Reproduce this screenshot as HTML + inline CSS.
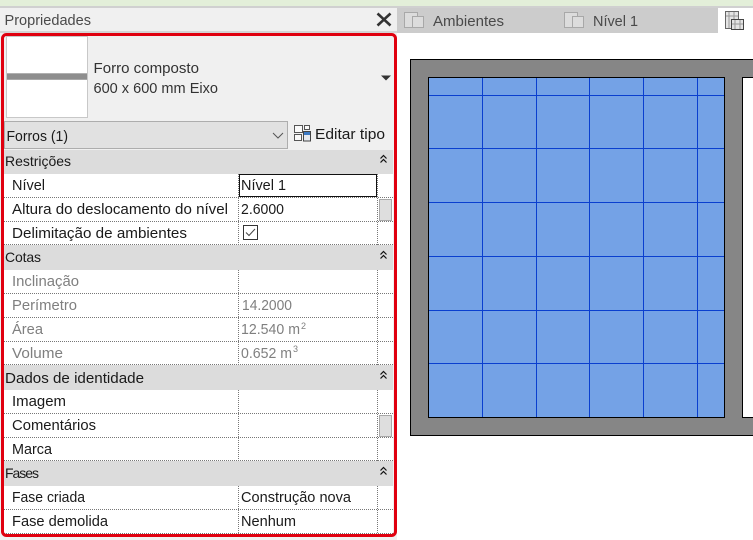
<!DOCTYPE html>
<html><head><meta charset="utf-8"><style>
html,body{margin:0;padding:0;background:#fff;width:753px;height:540px;overflow:hidden}
svg{display:block}
text{font-family:"Liberation Sans",sans-serif;font-size:14.5px;fill:#1a1a1a}
.h{font-size:14px}
.d{stroke:#777;stroke-width:1;stroke-dasharray:1 1;fill:none}
.c{shape-rendering:crispEdges}
</style></head><body>
<svg width="753" height="540" viewBox="0 0 753 540" xmlns="http://www.w3.org/2000/svg">
<rect class="c" width="753" height="540" fill="#fff"/>
<rect class="c" width="753" height="6" fill="#e3efd9"/>
<rect class="c" y="6" width="753" height="2" fill="#d0d0d0"/>
<rect class="c" y="8" width="397" height="532" fill="#f0f0f0"/>
<rect class="c" x="397" y="8" width="321" height="25" fill="#cccccc"/>
<text x="4.5" y="25" textLength="86.5" lengthAdjust="spacingAndGlyphs" style="fill:#4a4a4a">Propriedades</text>
<path d="M377.5 13.5L390.5 25.5M390.5 13.5L377.5 25.5" stroke="#333" stroke-width="2.6" fill="none"/>
<rect class="c" x="0" y="31" width="397" height="2" fill="#d4d4d4"/>

<!-- tabs -->
<g fill="#dcdcdc" stroke="#a8a8a8">
<rect x="404.5" y="12.5" width="13" height="15"/><rect x="412.5" y="16.5" width="11" height="11"/>
<rect x="564.5" y="12.5" width="13" height="15"/><rect x="572.5" y="16.5" width="11" height="11"/>
</g>
<text x="433" y="26" textLength="71" style="fill:#4a4a4a" lengthAdjust="spacingAndGlyphs">Ambientes</text>
<text x="593" y="26" textLength="45" style="fill:#4a4a4a" lengthAdjust="spacingAndGlyphs">Nível 1</text>
<g fill="#e4e4e4" stroke="#666">
<rect x="725.5" y="11.5" width="13" height="17"/><rect x="731.5" y="19.5" width="12" height="10" stroke="#444"/>
</g>
<path d="M729 12v16M734 12v7M726 16h12M735 20v9M740 20v9M732 24h11" stroke="#999" fill="none"/>

<!-- type selector -->
<rect class="c" x="6.5" y="36.5" width="81" height="81" fill="#fff" stroke="#c8c8c8"/>
<rect class="c" x="7" y="73" width="80" height="7" fill="#8e8e8e"/>
<rect class="c" x="7" y="73" width="80" height="1" fill="#b0b0b0"/>
<rect class="c" x="7" y="79" width="80" height="1" fill="#a8a8a8"/>
<text x="93.5" y="73" textLength="105.5" lengthAdjust="spacingAndGlyphs" style="fill:#333">Forro composto</text>
<text x="93.5" y="93" textLength="124.5" lengthAdjust="spacingAndGlyphs" style="fill:#333">600 x 600 mm Eixo</text>
<path d="M381 75.5h10l-5 5z" fill="#333"/>
<rect class="c" x="4.5" y="121.5" width="283" height="27" fill="#e1e1e1" stroke="#adadad"/>
<text x="6.5" y="141" textLength="61.5" lengthAdjust="spacingAndGlyphs">Forros (1)</text>
<path d="M273 133l5 5l5-5" stroke="#555" fill="none"/>
<g fill="#fafafa" stroke="#555">
<rect x="294.5" y="125.5" width="8" height="7"/><rect x="304.5" y="125.5" width="5" height="4"/><rect x="294.5" y="134.5" width="7" height="6"/>
</g>
<rect x="303.5" y="131.5" width="7" height="9.5" fill="#e4e8ee" stroke="#444"/>
<rect class="c" x="304" y="132" width="6" height="3" fill="#3a78c2"/>
<text x="315" y="139" textLength="70" lengthAdjust="spacingAndGlyphs">Editar tipo</text>

<!-- table backgrounds -->
<rect class="c" x="4" y="150" width="389" height="24" fill="#dcdcdc"/>
<rect class="c" x="4" y="174" width="389" height="71" fill="#fff"/>
<rect class="c" x="4" y="245" width="389" height="25" fill="#dcdcdc"/>
<rect class="c" x="4" y="270" width="389" height="95" fill="#fff"/>
<rect class="c" x="4" y="365" width="389" height="25" fill="#dcdcdc"/>
<rect class="c" x="4" y="390" width="389" height="71" fill="#fff"/>
<rect class="c" x="4" y="461" width="389" height="25" fill="#dcdcdc"/>
<rect class="c" x="4" y="486" width="389" height="48" fill="#fff"/>

<!-- dotted lines -->
<g class="d c">
<path d="M4 197.5H393M4 221.5H393M4 244.5H393M4 293.5H393M4 317.5H393M4 341.5H393M4 364.5H393M4 413.5H393M4 437.5H393M4 460.5H393M4 509.5H393M4 533.5H393"/>
<path d="M238.5 174V245M377.5 174V245M238.5 270V365M377.5 270V365M238.5 390V461M377.5 390V461M238.5 486V534M377.5 486V534"/>
</g>

<!-- headers -->
<text class="h" x="5" y="166" textLength="66" lengthAdjust="spacing">Restrições</text>
<text class="h" x="5" y="262" textLength="36" lengthAdjust="spacing">Cotas</text>
<text x="5" y="383" textLength="139" lengthAdjust="spacingAndGlyphs">Dados de identidade</text>
<text class="h" x="5" y="478" textLength="34" lengthAdjust="spacing">Fases</text>
<g stroke="#111" stroke-width="1.2" fill="none">
<path d="M380.5 158.5l3-3l3 3M380.5 162.5l3-3l3 3"/>
<path d="M380.5 254.5l3-3l3 3M380.5 258.5l3-3l3 3"/>
<path d="M380.5 374.5l3-3l3 3M380.5 378.5l3-3l3 3"/>
<path d="M380.5 470.5l3-3l3 3M380.5 474.5l3-3l3 3"/>
</g>

<!-- rows -->
<rect class="c" x="239.5" y="174.5" width="137" height="22" fill="#fff" stroke="#111"/>
<text x="12" y="190" textLength="33" lengthAdjust="spacingAndGlyphs">Nível</text>
<text x="241" y="190" textLength="45" lengthAdjust="spacingAndGlyphs">Nível 1</text>
<text x="12" y="214" textLength="216" lengthAdjust="spacingAndGlyphs">Altura do deslocamento do nível</text>
<text x="241" y="214" textLength="43" lengthAdjust="spacingAndGlyphs">2.6000</text>
<text x="12" y="238" textLength="175" lengthAdjust="spacingAndGlyphs">Delimitação de ambientes</text>
<rect class="c" x="243.5" y="225.5" width="14" height="14" fill="#fff" stroke="#333"/>
<path d="M246 232.5l3 3l6-6.5" stroke="#444" fill="none"/>

<text style="fill:#7f7f7f" x="12" y="286" textLength="67" lengthAdjust="spacingAndGlyphs">Inclinação</text>
<text style="fill:#7f7f7f" x="12" y="310" textLength="65" lengthAdjust="spacingAndGlyphs">Perímetro</text>
<text style="fill:#7f7f7f" x="242" y="310" textLength="50" lengthAdjust="spacingAndGlyphs">14.2000</text>
<text style="fill:#7f7f7f" x="12" y="334" textLength="31" lengthAdjust="spacingAndGlyphs">Área</text>
<text style="fill:#7f7f7f" x="241" y="334" textLength="59" lengthAdjust="spacingAndGlyphs">12.540 m</text>
<text style="fill:#7f7f7f;font-size:9px" x="301" y="329">2</text>
<text style="fill:#7f7f7f" x="12" y="358" textLength="51" lengthAdjust="spacingAndGlyphs">Volume</text>
<text style="fill:#7f7f7f" x="241" y="358" textLength="51" lengthAdjust="spacingAndGlyphs">0.652 m</text>
<text style="fill:#7f7f7f;font-size:9px" x="293" y="352">3</text>

<text x="12" y="406" textLength="54" lengthAdjust="spacingAndGlyphs">Imagem</text>
<text x="12" y="430" textLength="84" lengthAdjust="spacingAndGlyphs">Comentários</text>
<text x="12" y="454" textLength="40" lengthAdjust="spacingAndGlyphs">Marca</text>
<text x="12" y="502" textLength="73" lengthAdjust="spacingAndGlyphs">Fase criada</text>
<text x="241" y="502" textLength="110" lengthAdjust="spacingAndGlyphs">Construção nova</text>
<text x="12" y="526" textLength="96" lengthAdjust="spacingAndGlyphs">Fase demolida</text>
<text x="241" y="526" textLength="55" lengthAdjust="spacingAndGlyphs">Nenhum</text>

<!-- scrollbar thumbs -->
<rect class="c" x="379.5" y="199.5" width="12" height="21" fill="#dedede" stroke="#a8a8a8"/>
<rect class="c" x="379.5" y="415.5" width="12" height="21" fill="#dedede" stroke="#a8a8a8"/>

<!-- red highlight -->
<rect x="2.5" y="34.5" width="393" height="501" rx="4" ry="4" fill="none" stroke="#e0000f" stroke-width="3"/>

<!-- drawing -->
<rect class="c" x="410.5" y="59.5" width="343" height="376" fill="#868686" stroke="#000"/>
<rect class="c" x="428.5" y="77.5" width="296" height="340" fill="#74a2e6" stroke="#000"/>
<g class="c" stroke="#0a3fcf" fill="none">
<path d="M482.5 78V417M536.5 78V417M589.5 78V417M643.5 78V417M697.5 78V417"/>
<path d="M429 95.5H724M429 148.5H724M429 202.5H724M429 256.5H724M429 310.5H724M429 363.5H724"/>
</g>
<rect class="c" x="742.5" y="77.5" width="12" height="340" fill="#fff" stroke="#000"/>
</svg>
</body></html>
